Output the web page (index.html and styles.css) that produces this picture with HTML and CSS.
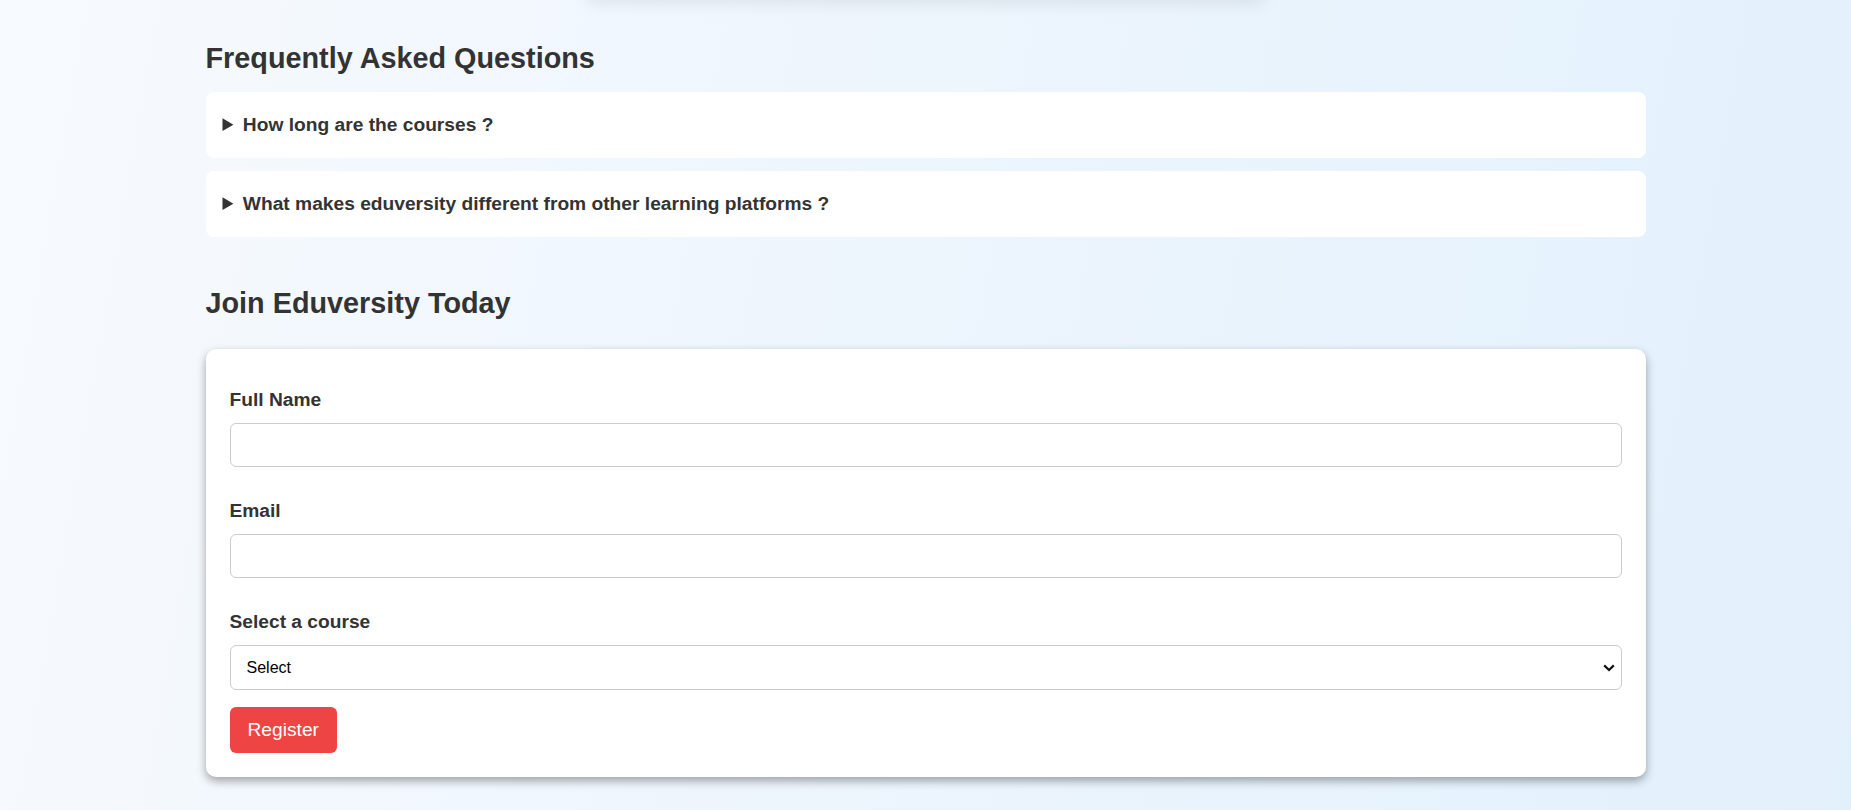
FILE: index.html
```html
<!DOCTYPE html>
<html lang="en">
<head>
<meta charset="utf-8">
<title>Eduversity</title>
<link rel="stylesheet" href="styles.css">
</head>
<body>
<div class="prev-card"></div>
<main class="container">
  <section class="faq">
    <h2 class="section-title faq-title">Frequently Asked Questions</h2>
    <details class="faq-item">
      <summary>How long are the courses ?</summary>
      <p>Most courses take between 4 and 12 weeks to complete.</p>
    </details>
    <details class="faq-item">
      <summary>What makes eduversity different from other learning platforms ?</summary>
      <p>Hands-on projects, expert mentors and a supportive community.</p>
    </details>
  </section>
  <section class="join">
    <h2 class="section-title join-title">Join Eduversity Today</h2>
    <form class="join-card">
      <label class="field-label" for="name">Full Name</label>
      <input class="field-input" type="text" id="name">
      <label class="field-label" for="email">Email</label>
      <input class="field-input" type="email" id="email">
      <label class="field-label" for="course">Select a course</label>
      <div class="select-wrap">
        <select class="field-select" id="course">
          <option>Select</option>
          <option>Web Development</option>
          <option>Data Science</option>
          <option>UI/UX Design</option>
        </select>
        <svg class="select-arrow" width="12" height="8" viewBox="0 0 12 8" aria-hidden="true">
          <path d="M1.2 1.4 L6 6 L10.8 1.4" fill="none" stroke="#111" stroke-width="2.2"/>
        </svg>
      </div>
      <button class="register-btn" type="button">Register</button>
    </form>
  </section>
</main>
</body>
</html>
```
FILE: styles.css
```css
* { box-sizing: border-box; }
html, body {
  margin: 0;
  padding: 0;
}
body {
  font-family: "Liberation Sans", Arial, sans-serif;
  color: #333;
  background: linear-gradient(100deg, #f7fafe 0%, #e2f0fc 100%);
  min-height: 810px;
  overflow: hidden;
}
.prev-card {
  width: 680px;
  height: 60px;
  margin: -60px auto 0;
  background: #fff;
  border-radius: 10px;
  box-shadow: 0 4px 16px rgba(0, 0, 0, 0.08);
}
.container {
  max-width: 1440px;
  margin: 0 auto;
  padding-top: 42px;
}
.section-title {
  margin: 0;
  font-size: 28.8px;
  font-weight: bold;
  color: #333;
}
.faq-title { margin-bottom: 17px; }
.faq-item {
  background: #fff;
  border-radius: 8px;
  padding: 22px 17px;
  margin-bottom: 13px;
}
.faq-item summary {
  font-size: 19.2px;
  font-weight: bold;
  cursor: pointer;
  line-height: 22px;
}
.faq-item p { margin: 10px 0 0; }
.join { margin-top: 50px; }
.join-title { margin-bottom: 29px; }
.join-card {
  display: flex;
  flex-direction: column;
  align-items: flex-start;
  background: #fff;
  border-radius: 10px;
  padding: 24px;
  box-shadow: 0 4px 10px rgba(0, 0, 0, 0.35);
}
.field-label {
  display: block;
  font-size: 19.2px;
  font-weight: bold;
  line-height: 22px;
  margin: 16px 0 12px;
}
.field-input,
.field-select {
  display: block;
  width: 100%;
  font-family: "Liberation Sans", Arial, sans-serif;
  font-size: 16px;
  border: 1px solid #ccc;
  border-radius: 6px;
  background: #fff;
}
.field-input {
  height: 44px;
  padding: 12px;
  margin-bottom: 17px;
}
.select-wrap {
  position: relative;
  width: 100%;
  margin-bottom: 17px;
}
.field-select {
  height: 45px;
  padding: 0 12px 0 16px;
  color: #000;
  appearance: none;
  -webkit-appearance: none;
}
.select-arrow {
  position: absolute;
  right: 7px;
  top: 19px;
  pointer-events: none;
}
.register-btn {
  display: block;
  background: #ef4444;
  color: #fff;
  border: none;
  border-radius: 6px;
  font-family: "Liberation Sans", Arial, sans-serif;
  font-size: 19.2px;
  padding: 12px 18px;
  height: 46px;
  cursor: pointer;
}
```
